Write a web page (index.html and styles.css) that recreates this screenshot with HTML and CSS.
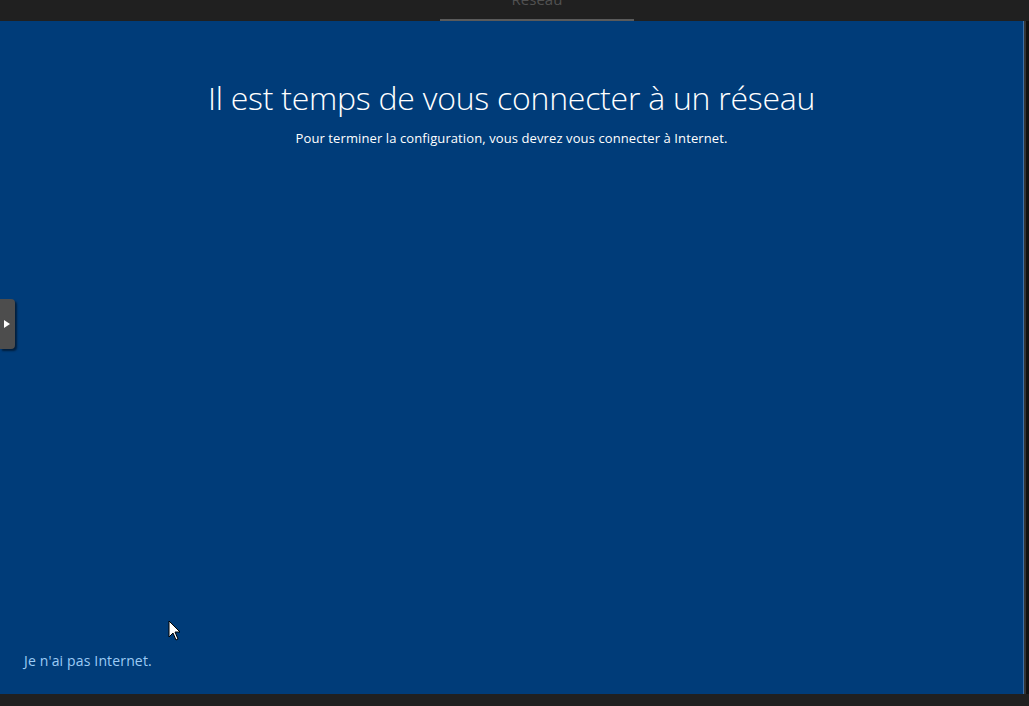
FILE: index.html
```html
<!DOCTYPE html>
<html lang="fr">
<head>
    <meta charset="UTF-8">
    <meta name="viewport" content="width=device-width, initial-scale=1.0">
    <title>Réseau</title>
    <link rel="stylesheet" href="styles.css">
</head>
<body>

    <div class="topbar">
        <div class="tab">Réseau</div>
    </div>

    <div class="frame">
        <div class="screen">
            <h1 class="title">Il est temps de vous connecter à un réseau</h1>
            <p class="subtitle">Pour terminer la configuration, vous devrez vous connecter à Internet.</p>

            <a class="skip" href="#">Je n'ai pas Internet.</a>

            <div class="side-handle">
                <svg width="6" height="8" viewBox="0 0 6 8"><path d="M0 0 L6 4 L0 8 Z" fill="#fff"/></svg>
            </div>

            <svg class="cursor" width="14" height="22" viewBox="0 0 14 22">
                <path d="M1 1 L1 17 L5 13 L8 20 L10 19 L7 12 L12 12 Z" fill="#fff" stroke="#000" stroke-width="1"/>
            </svg>
        </div>
        <div class="edge"></div>
    </div>

    <div class="bottombar"></div>

</body>
</html>
```

FILE: styles.css
```css
body {
    margin: 0;
    width: 1029px;
    height: 706px;
    overflow: hidden;
    background-color: #202020;
    font-family: "Open Sans", "Noto Sans", sans-serif;
    display: flex;
    flex-direction: column;
}

.topbar {
    height: 21px;
    background-color: #202020;
    padding-left: 440px;
    overflow: hidden;
}

/* tab label sits mostly above the visible area, like in the capture */
.tab {
    width: 194px;
    height: 27px;
    border-bottom: 2px solid #5a5a5a;
    color: #515151;
    font-size: 15px;
    line-height: 15px;
    text-align: center;
    margin-top: -16px;
    padding-top: 8px;
    box-sizing: content-box;
}

.frame {
    height: 673px;
    display: flex;
}

.screen {
    position: relative;
    width: 1023px;
    background-color: #003c79;
    text-align: center;
    color: #fff;
}

.edge {
    width: 1px;
    background-color: #3d6fa6;
    border-right: 2px solid #333;
    box-shadow: 3px 0 0 #111;
}

.title {
    margin: 55px 0 0;
    font-size: 32px;
    font-weight: 300;
    line-height: 44px;
    letter-spacing: -0.25px;
}

.subtitle {
    margin: 9px 0 0;
    font-size: 13px;
    line-height: 18px;
    letter-spacing: 0.1px;
}

.skip {
    position: absolute;
    left: 24px;
    top: 630px;
    color: #9ccbf5;
    font-size: 14px;
    letter-spacing: 0.15px;
    text-decoration: none;
}

.side-handle {
    position: absolute;
    left: 0;
    top: 278px;
    width: 15px;
    height: 50px;
    background-color: #4d4d4d;
    border-radius: 0 4px 4px 0;
    box-shadow: 2px 2px 2px rgba(0, 0, 0, 0.5);
    display: flex;
    align-items: center;
    padding-left: 4px;
    box-sizing: border-box;
}

.cursor {
    position: absolute;
    left: 168px;
    top: 599px;
}

.bottombar {
    flex: 1;
    background-color: #202020;
}
```
